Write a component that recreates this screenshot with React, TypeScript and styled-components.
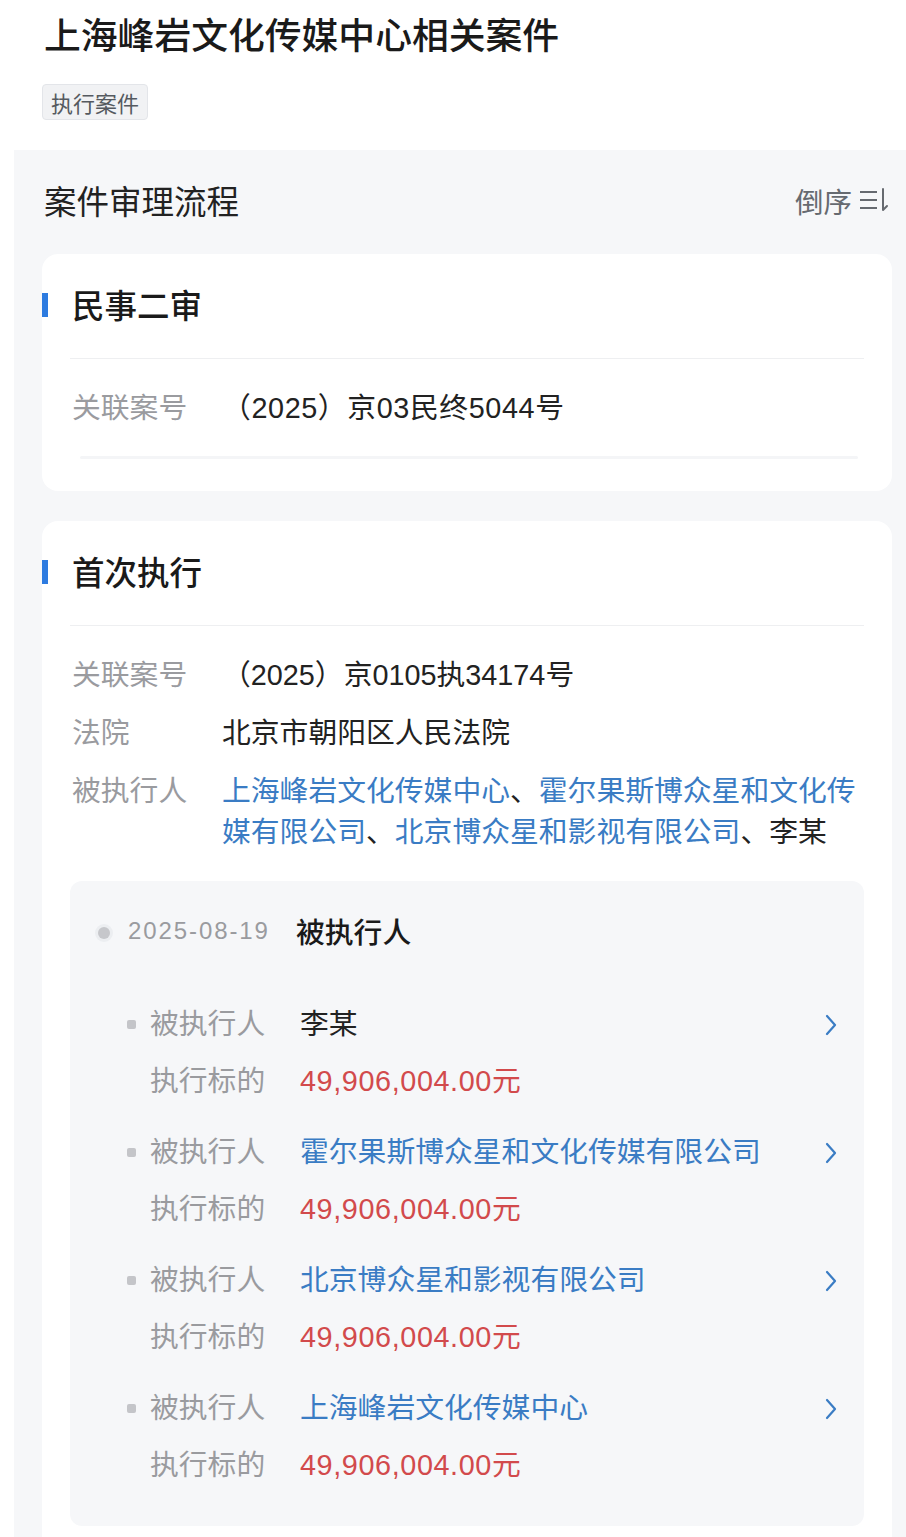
import React from "react";
import styled, { createGlobalStyle } from "styled-components";

const Global = createGlobalStyle`
  html, body { margin: 0; padding: 0; background: #ffffff; }
  body { font-family: "Liberation Sans", "Noto Sans CJK SC", sans-serif; color: #1f1f1f; }
  * { box-sizing: border-box; }
`;

const Page = styled.div`
  width: 906px;
  overflow: hidden;
`;

const Header = styled.header`
  padding: 8px 0 30px 44px;
`;

const Title = styled.h1`
  margin: 0;
  font-family: "Noto Sans CJK SC", sans-serif;
  font-size: 36.8px;
  line-height: 50px;
  font-weight: 500;
  color: #1a1a1a;
`;

const Tag = styled.span`
  display: inline-block;
  margin: 26px 0 0 -2px;
  padding: 0 8px;
  height: 36px;
  line-height: 34px;
  font-family: "Noto Sans CJK SC", sans-serif;
  font-size: 22px;
  color: #555a60;
  background: #f1f2f4;
  border: 1px solid #e3e5e9;
  border-radius: 4px;
`;

const Section = styled.section`
  margin-left: 14px;
  background: #f6f7f9;
  padding: 0 14px 40px 28px;
`;

const SectionHead = styled.div`
  height: 104px;
  display: flex;
  align-items: center;
  justify-content: space-between;
`;

const SectionTitle = styled.h2`
  margin: 0 0 5px 2px;
  font-family: "Noto Sans CJK SC", sans-serif;
  font-size: 32.5px;
  font-weight: 400;
  color: #222;
`;

const Sort = styled.div`
  display: flex;
  align-items: center;
  gap: 6px;
  margin: 0 2px 4px 0;
  font-family: "Noto Sans CJK SC", sans-serif;
  font-size: 28.5px;
  color: #666a70;
`;

const Card = styled.div`
  background: #ffffff;
  border-radius: 16px;
  padding: 0 28px;
  & + & { margin-top: 30px; }
`;

const CardHead = styled.div`
  position: relative;
  height: 105px;
  display: flex;
  align-items: center;
  border-bottom: 1px solid #eeeff1;
  padding-left: 2px;
`;

const Bar = styled.span`
  position: absolute;
  left: -28px;
  top: 50%;
  margin-top: -13px;
  width: 6px;
  height: 24px;
  background: #2d7be0;
`;

const CardTitle = styled.h3`
  margin: 0 0 5px 0;
  font-family: "Noto Sans CJK SC", sans-serif;
  font-size: 32.5px;
  font-weight: 500;
  color: #1a1a1a;
`;

const InfoList = styled.div`
  padding: 29px 0 0 2px;
  display: flex;
  flex-direction: column;
  gap: 17px;
`;

const InfoRow = styled.div`
  display: flex;
  font-size: 28.8px;
  line-height: 41px;
`;

const Label = styled.div`
  flex: 0 0 150px;
  color: #9a9b9f;
`;

const Value = styled.div<{ $tone?: "link" | "money"; $wide?: boolean }>`
  flex: 1;
  letter-spacing: ${(p) => (p.$wide ? "0.6px" : "0")};
  color: ${(p) => (p.$tone === "link" ? "#3a7cc4" : p.$tone === "money" ? "#d24a4c" : "#222")};
`;

const Link = styled.span`
  color: #3a7cc4;
`;

const Fade = styled.div`
  margin: 27px 6px 0 10px;
  height: 3px;
  background: #f4f5f7;
  border-radius: 2px;
`;

const CardFoot = styled.div`
  height: 32px;
`;

const Panel = styled.div`
  margin-top: 28px;
  background: #f6f7f9;
  border-radius: 12px;
  padding: 32px 26px 40px 28px;
`;

const DateRow = styled.div`
  display: flex;
  align-items: center;
  height: 40px;
  padding-bottom: 5px;
`;

const Dot = styled.span`
  width: 12px;
  height: 12px;
  margin: 5px 18px 0 0;
  border-radius: 50%;
  background: #c6c7cb;
  box-shadow: 0 0 0 3px #eceef1;
`;

const DateText = styled.span`
  width: 168px;
  font-size: 24px;
  letter-spacing: 1.9px;
  color: #9a9b9f;
`;

const EventTitle = styled.span`
  font-family: "Noto Sans CJK SC", sans-serif;
  font-size: 28.8px;
  font-weight: 500;
  color: #1a1a1a;
`;

const Items = styled.div`
  margin-top: 51px;
  display: flex;
  flex-direction: column;
  gap: 30px;
`;

const Item = styled.div`
  display: flex;
  flex-direction: column;
  gap: 16px;
`;

const ItemRow = styled.div`
  display: flex;
  align-items: center;
  padding-left: 29px;
  font-size: 28.8px;
  line-height: 41px;
`;

const Bullet = styled.span<{ $hidden?: boolean }>`
  flex: 0 0 9px;
  height: 9px;
  margin-right: 14px;
  border-radius: 2px;
  background: ${(p) => (p.$hidden ? "transparent" : "#c4c5c9")};
`;

const Chevron = styled.svg`
  flex: 0 0 auto;
  margin-left: auto;
`;

const SortIcon = () => (
  <svg width="32" height="30" viewBox="0 0 32 30" fill="none" stroke="#666a70" strokeWidth="2">
    <line x1="2" y1="7" x2="19" y2="7" />
    <line x1="2" y1="15" x2="19" y2="15" />
    <line x1="2" y1="23" x2="19" y2="23" />
    <path d="M25 4 V25 L29 21" strokeLinecap="round" strokeLinejoin="round" />
  </svg>
);

const ChevronIcon = () => (
  <Chevron width="14" height="24" viewBox="0 0 14 24" fill="none">
    <polyline points="3,3 11,12 3,21" stroke="#3a7cc4" strokeWidth="2.2" strokeLinecap="round" strokeLinejoin="round" />
  </Chevron>
);

type Party = { name: string; link: boolean };

const parties: Party[] = [
  { name: "李某", link: false },
  { name: "霍尔果斯博众星和文化传媒有限公司", link: true },
  { name: "北京博众星和影视有限公司", link: true },
  { name: "上海峰岩文化传媒中心", link: true },
];

export default function App() {
  return (
    <Page>
      <Global />
      <Header>
        <Title>上海峰岩文化传媒中心相关案件</Title>
        <Tag>执行案件</Tag>
      </Header>
      <Section>
        <SectionHead>
          <SectionTitle>案件审理流程</SectionTitle>
          <Sort>
            倒序
            <SortIcon />
          </Sort>
        </SectionHead>

        <Card>
          <CardHead>
            <Bar />
            <CardTitle>民事二审</CardTitle>
          </CardHead>
          <InfoList>
            <InfoRow>
              <Label>关联案号</Label>
              <Value $wide>（2025）京03民终5044号</Value>
            </InfoRow>
          </InfoList>
          <Fade />
          <CardFoot />
        </Card>

        <Card>
          <CardHead>
            <Bar />
            <CardTitle>首次执行</CardTitle>
          </CardHead>
          <InfoList>
            <InfoRow>
              <Label>关联案号</Label>
              <Value>（2025）京0105执34174号</Value>
            </InfoRow>
            <InfoRow>
              <Label>法院</Label>
              <Value>北京市朝阳区人民法院</Value>
            </InfoRow>
            <InfoRow>
              <Label>被执行人</Label>
              <Value>
                <Link>上海峰岩文化传媒中心</Link>、<Link>霍尔果斯博众星和文化传媒有限公司</Link>、
                <Link>北京博众星和影视有限公司</Link>、李某
              </Value>
            </InfoRow>
          </InfoList>
          <Panel>
            <DateRow>
              <Dot />
              <DateText>2025-08-19</DateText>
              <EventTitle>被执行人</EventTitle>
            </DateRow>
            <Items>
              {parties.map((p) => (
                <Item key={p.name}>
                  <ItemRow>
                    <Bullet />
                    <Label>被执行人</Label>
                    <Value $tone={p.link ? "link" : undefined}>{p.name}</Value>
                    <ChevronIcon />
                  </ItemRow>
                  <ItemRow>
                    <Bullet $hidden />
                    <Label>执行标的</Label>
                    <Value $tone="money" $wide>49,906,004.00元</Value>
                  </ItemRow>
                </Item>
              ))}
            </Items>
          </Panel>
          <CardFoot />
        </Card>
      </Section>
    </Page>
  );
}
